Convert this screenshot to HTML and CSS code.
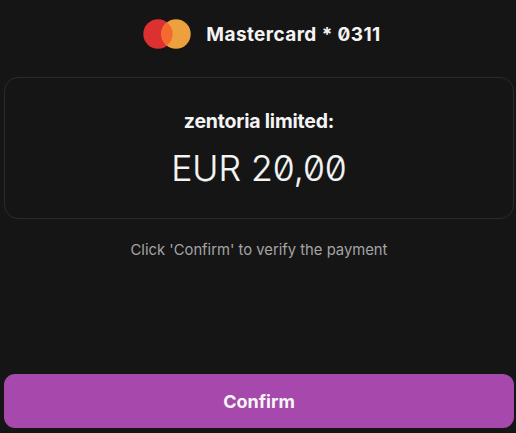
FILE: index.html
```html
<!DOCTYPE html>
<html lang="en">
<head>
<meta charset="utf-8">
<title>Confirm payment</title>
<link rel="stylesheet" href="styles.css">
</head>
<body>
<main class="page">
  <header class="card-row">
    <svg class="logo" width="48" height="30" viewBox="0 0 48 30" aria-hidden="true">
      <circle cx="15" cy="15" r="14.7" fill="#dd3030"/>
      <circle cx="33" cy="15" r="14.7" fill="#eda03e"/>
      <path d="M24 3.4a14.7 14.7 0 0 1 0 23.2a14.7 14.7 0 0 1 0-23.2z" fill="#f4692f"/>
    </svg>
    <span class="card-name">Mastercard * 0311</span>
  </header>
  <section class="summary">
    <div class="merchant">zentoria limited:</div>
    <div class="amount">EUR 20,00</div>
  </section>
  <p class="hint">Click 'Confirm' to verify the payment</p>
  <button class="confirm" type="button">Confirm</button>
</main>
</body>
</html>
```

FILE: styles.css
```css
* { box-sizing: border-box; }
html, body { margin: 0; height: 100%; }
body {
  background: #151515;
  color: #f4f4f4;
  font-family: Inter, "Liberation Sans", sans-serif;
  font-feature-settings: "zero" 1;
}
.page {
  height: 433px;
  padding: 0 2px 5px 4px;
  display: flex;
  flex-direction: column;
}
.card-row {
  height: 77px;
  padding: 0 0 9px 6px;
  display: flex;
  align-items: center;
  justify-content: center;
  gap: 15px;
}
.logo { flex: none; }
.card-name {
  font-size: 19px;
  font-weight: 700;
  letter-spacing: 0.4px;
}
.summary {
  height: 142px;
  border: 1px solid #2b2b2b;
  border-radius: 14px;
  display: flex;
  flex-direction: column;
  align-items: center;
  padding-top: 31px;
}
.merchant {
  font-size: 19.5px;
  font-weight: 700;
  line-height: 24px;
  letter-spacing: -0.2px;
}
.amount {
  margin-top: 14px;
  font-size: 35.5px;
  font-weight: 300;
  line-height: 44px;
  -webkit-text-stroke: 0.2px #f4f4f4;
}
.hint {
  margin: 21px 0 0;
  text-align: center;
  color: #a4a4a4;
  font-size: 14.8px;
  line-height: 20px;
}
.confirm {
  margin-top: auto;
  height: 54px;
  border: 0;
  border-radius: 11px;
  background: #a648ac;
  color: #f6f6f6;
  font-family: inherit;
  font-size: 18px;
  font-weight: 700;
}
```
